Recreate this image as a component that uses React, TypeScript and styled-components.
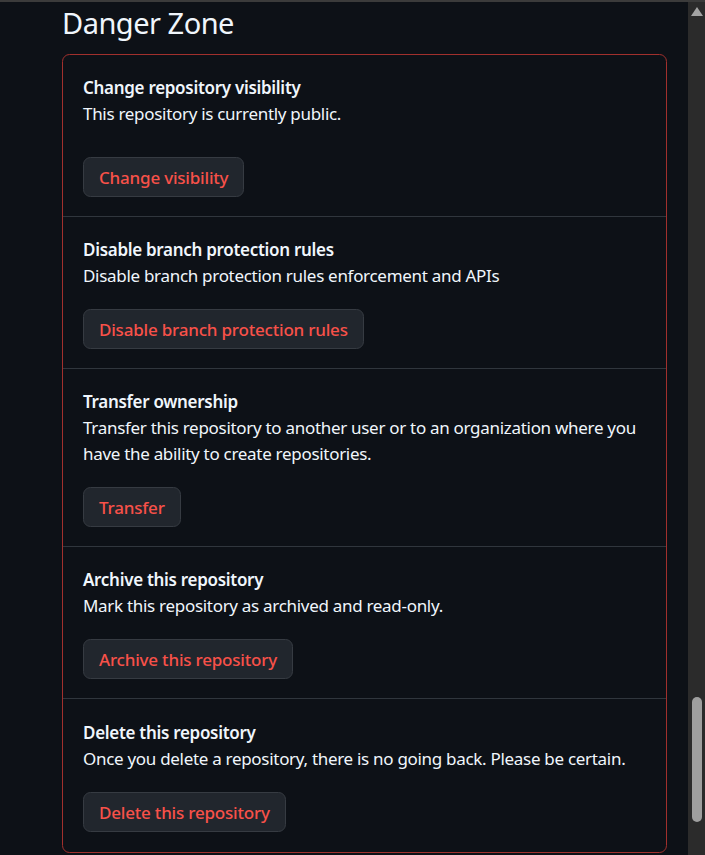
import styled, { createGlobalStyle } from 'styled-components'

const GlobalStyle = createGlobalStyle`
  html, body {
    margin: 0;
    padding: 0;
    background: #0d1117;
  }
  body {
    font-family: "Noto Sans", "Open Sans", sans-serif;
    color: #f0f6fc;
    -webkit-font-smoothing: antialiased;
  }
`

type DangerItem = {
  title: string
  description: string
  action: string
  spaced?: boolean
}

const items: DangerItem[] = [
  {
    title: 'Change repository visibility',
    description: 'This repository is currently public.',
    action: 'Change visibility',
    spaced: true,
  },
  {
    title: 'Disable branch protection rules',
    description: 'Disable branch protection rules enforcement and APIs',
    action: 'Disable branch protection rules',
  },
  {
    title: 'Transfer ownership',
    description:
      'Transfer this repository to another user or to an organization where you have the ability to create repositories.',
    action: 'Transfer',
  },
  {
    title: 'Archive this repository',
    description: 'Mark this repository as archived and read-only.',
    action: 'Archive this repository',
  },
  {
    title: 'Delete this repository',
    description: 'Once you delete a repository, there is no going back. Please be certain.',
    action: 'Delete this repository',
  },
]

const Window = styled.div`
  display: flex;
  height: 855px;
  overflow: hidden;
  border-top: 2px solid #3b3b3b;
  box-sizing: border-box;
`

const Main = styled.main`
  flex: 1;
  padding-left: 62px;
  overflow: hidden;
`

const Heading = styled.h2`
  margin: 2px 0 12px;
  font-size: 29px;
  line-height: 38px;
  font-weight: 400;
  letter-spacing: -0.5px;
  color: #f0f6fc;
`

const DangerBox = styled.section`
  width: 605px;
  box-sizing: border-box;
  border: 1px solid #a1302d;
  border-radius: 7.5px;
`

const Row = styled.div`
  padding: 20px 20px 19px;

  & + & {
    border-top: 1px solid #30363d;
  }

  &:last-child {
    padding-top: 21px;
    padding-bottom: 20px;
  }
`

const Title = styled.strong`
  display: block;
  font-size: 17px;
  line-height: 26px;
  font-weight: 600;
  letter-spacing: -0.3px;
  color: #f0f6fc;
`

const Description = styled.p`
  margin: 0;
  font-size: 17px;
  line-height: 26px;
  letter-spacing: -0.3px;
  color: #f0f6fc;
`

const DangerButton = styled.button<{ $spaced?: boolean }>`
  display: inline-flex;
  align-items: center;
  height: 40px;
  margin-top: ${({ $spaced }) => ($spaced ? '30px' : '20px')};
  padding: 0 15px;
  box-sizing: border-box;
  background: #21262d;
  border: 1px solid #363b42;
  border-radius: 7.5px;
  color: #f85149;
  font-family: inherit;
  font-size: 17px;
  font-weight: 500;
  letter-spacing: -0.2px;
  cursor: pointer;
`

const Scrollbar = styled.div`
  width: 17px;
  flex: none;
  display: flex;
  flex-direction: column;
  align-items: center;
  background: #2b2b2b;
`

const ArrowUp = styled.div`
  margin-top: 5px;
  width: 0;
  height: 0;
  border-left: 6px solid transparent;
  border-right: 6px solid transparent;
  border-bottom: 9px solid #a3a3a3;
`

const Thumb = styled.div`
  margin-top: auto;
  margin-bottom: 33px;
  width: 10px;
  height: 125px;
  border-radius: 5px;
  background: #9f9f9f;
`

export default function App() {
  return (
    <>
      <GlobalStyle />
      <Window>
        <Main>
          <Heading>Danger Zone</Heading>
          <DangerBox>
            {items.map(item => (
              <Row key={item.title}>
                <Title>{item.title}</Title>
                <Description>{item.description}</Description>
                <DangerButton $spaced={item.spaced} type="button">
                  {item.action}
                </DangerButton>
              </Row>
            ))}
          </DangerBox>
        </Main>
        <Scrollbar>
          <ArrowUp />
          <Thumb />
        </Scrollbar>
      </Window>
    </>
  )
}
